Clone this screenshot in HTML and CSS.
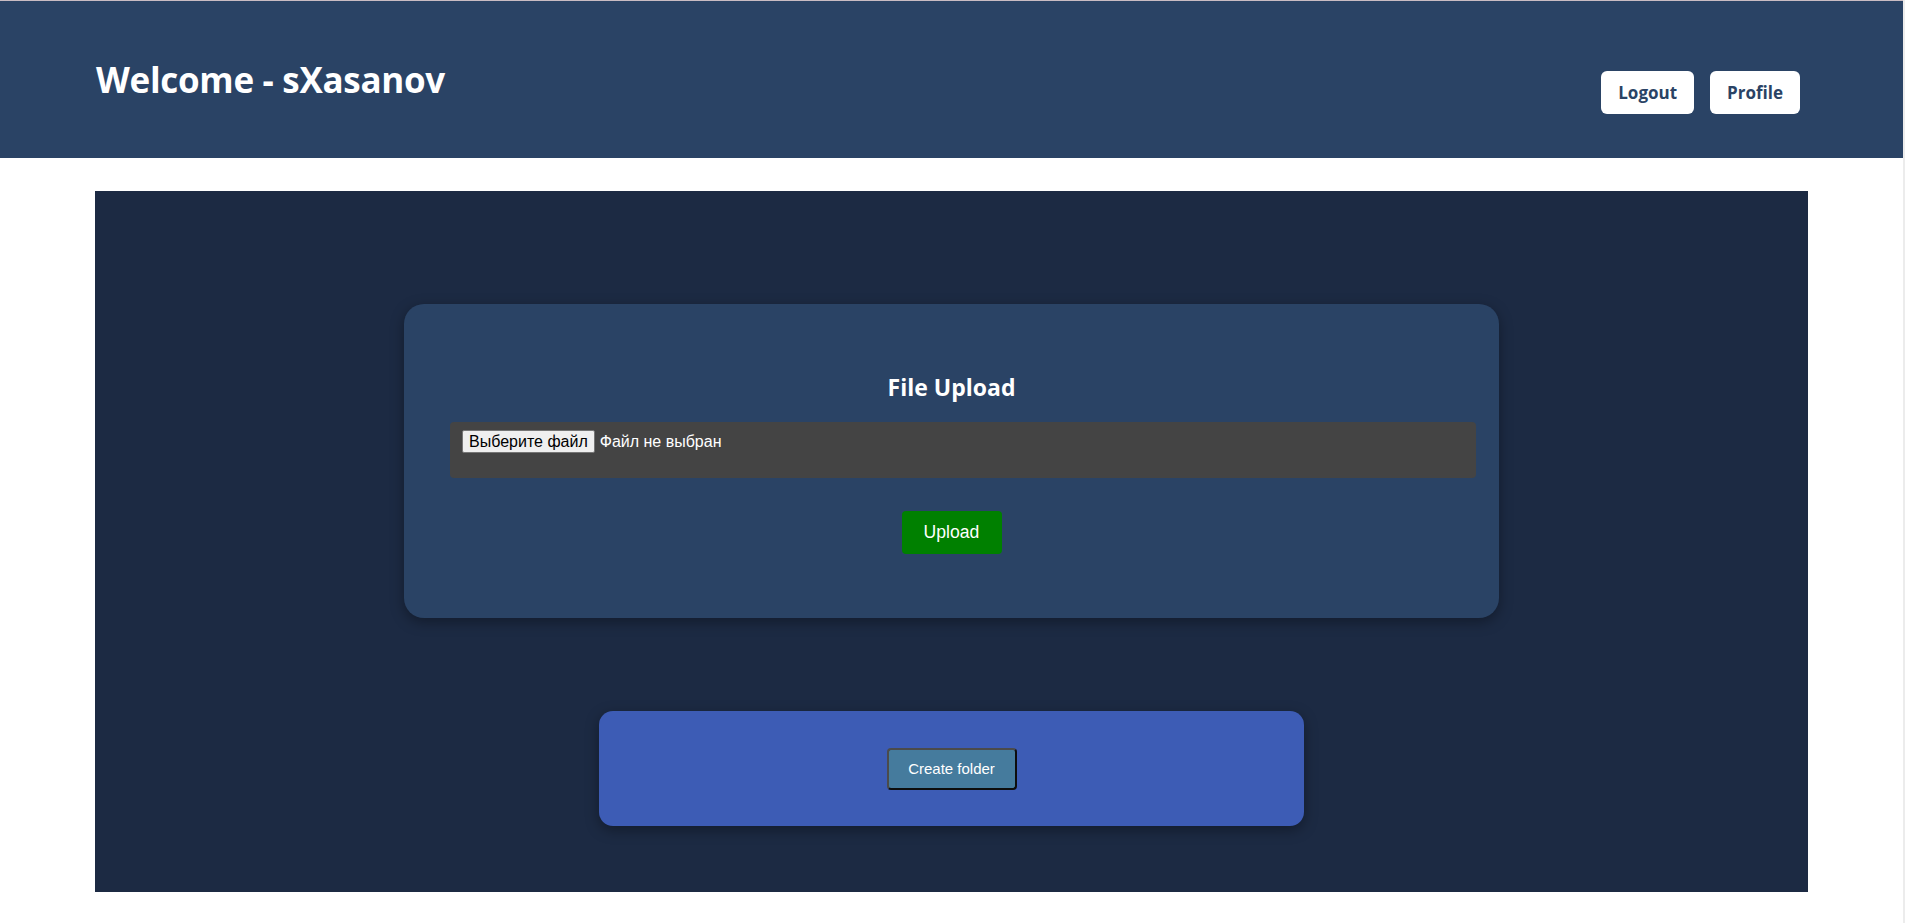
FILE: index.html
```html
<!DOCTYPE html>
<html lang="ru">
<head>
<meta charset="utf-8">
<title>Dashboard</title>
<link rel="stylesheet" href="styles.css">
</head>
<body>
<div class="page">
  <header class="topbar">
    <h1 class="welcome">Welcome - sXasanov</h1>
    <div class="actions">
      <button class="top-btn">Logout</button>
      <button class="top-btn">Profile</button>
    </div>
  </header>
  <main class="workspace">
    <section class="upload-card">
      <h2 class="upload-title">File Upload</h2>
      <div class="file-box">
        <span class="file-choose">Выберите файл</span>
        <span class="file-name">Файл не выбран</span>
      </div>
      <button class="upload-btn">Upload</button>
    </section>
    <section class="folder-card">
      <button class="folder-btn">Create folder</button>
    </section>
  </main>
</div>
</body>
</html>
```
FILE: styles.css
```css
html, body {
  margin: 0;
  padding: 0;
  background: #ffffff;
}
body {
  font-family: "Open Sans", "Noto Sans", sans-serif;
}
.page {
  width: 1903px;
  min-height: 923px;
  border-right: 2px solid #ececec;
}
.topbar {
  box-sizing: border-box;
  height: 158px;
  border-top: 1px solid #c9bcc3;
  background: #2a4365;
  display: flex;
  justify-content: space-between;
  align-items: flex-start;
  padding: 0 103px 0 96px;
}
.welcome {
  margin: 58px 0 0;
  font-size: 35px;
  line-height: 42px;
  font-weight: 700;
  color: #ffffff;
  letter-spacing: -0.3px;
}
.actions {
  display: flex;
  gap: 16px;
  margin-top: 70px;
}
.top-btn {
  font-family: "Open Sans", "Noto Sans", sans-serif;
  font-weight: 700;
  font-size: 17px;
  color: #2a4365;
  background: #ffffff;
  border: none;
  border-radius: 6px;
  height: 43px;
  padding: 0 17px;
  cursor: pointer;
}
.workspace {
  box-sizing: border-box;
  width: 90%;
  margin: 33px auto 0;
  height: 701px;
  background: #1c2a43;
  display: flex;
  flex-direction: column;
  align-items: center;
  padding-top: 113px;
  gap: 93px;
}
.upload-card {
  box-sizing: border-box;
  width: 1095px;
  height: 314px;
  background: #2a4365;
  border-radius: 20px;
  box-shadow: 0 4px 14px rgba(0, 0, 0, 0.35);
  padding: 68px 46px 0;
  display: flex;
  flex-direction: column;
  align-items: center;
}
.upload-title {
  margin: 0;
  font-size: 23px;
  line-height: 30px;
  font-weight: 700;
  color: #ffffff;
}
.file-box {
  box-sizing: border-box;
  align-self: flex-start;
  width: 1026px;
  height: 56px;
  margin-top: 20px;
  background: #444444;
  border-radius: 4px;
  padding: 8px 12px;
  display: flex;
  align-items: flex-start;
  gap: 5px;
  font-family: "Liberation Sans", Arial, sans-serif;
  font-size: 16px;
}
.file-choose {
  box-sizing: border-box;
  height: 23px;
  line-height: 21px;
  padding: 0 6px;
  background: #efefef;
  border: 1px solid #767676;
  border-radius: 2px;
  color: #000000;
}
.file-name {
  color: #ffffff;
  line-height: 23px;
}
.upload-btn {
  margin-top: 33px;
  width: 100px;
  height: 43px;
  background: #008000;
  color: #ffffff;
  border: none;
  border-radius: 4px;
  font-family: "Liberation Sans", Arial, sans-serif;
  font-size: 17.6px;
  cursor: pointer;
}
.folder-card {
  box-sizing: border-box;
  width: 705px;
  height: 115px;
  background: #3d5cb5;
  border-radius: 14px;
  box-shadow: 0 4px 14px rgba(0, 0, 0, 0.35);
  display: flex;
  align-items: center;
  justify-content: center;
}
.folder-btn {
  box-sizing: border-box;
  width: 130px;
  height: 42px;
  background: #457b9d;
  color: #ffffff;
  border-width: 2px;
  border-style: solid;
  border-color: #4b4b4b #0d0d0d #0d0d0d #4b4b4b;
  border-radius: 4px;
  font-family: "Liberation Sans", Arial, sans-serif;
  font-size: 15px;
  cursor: pointer;
}
```
